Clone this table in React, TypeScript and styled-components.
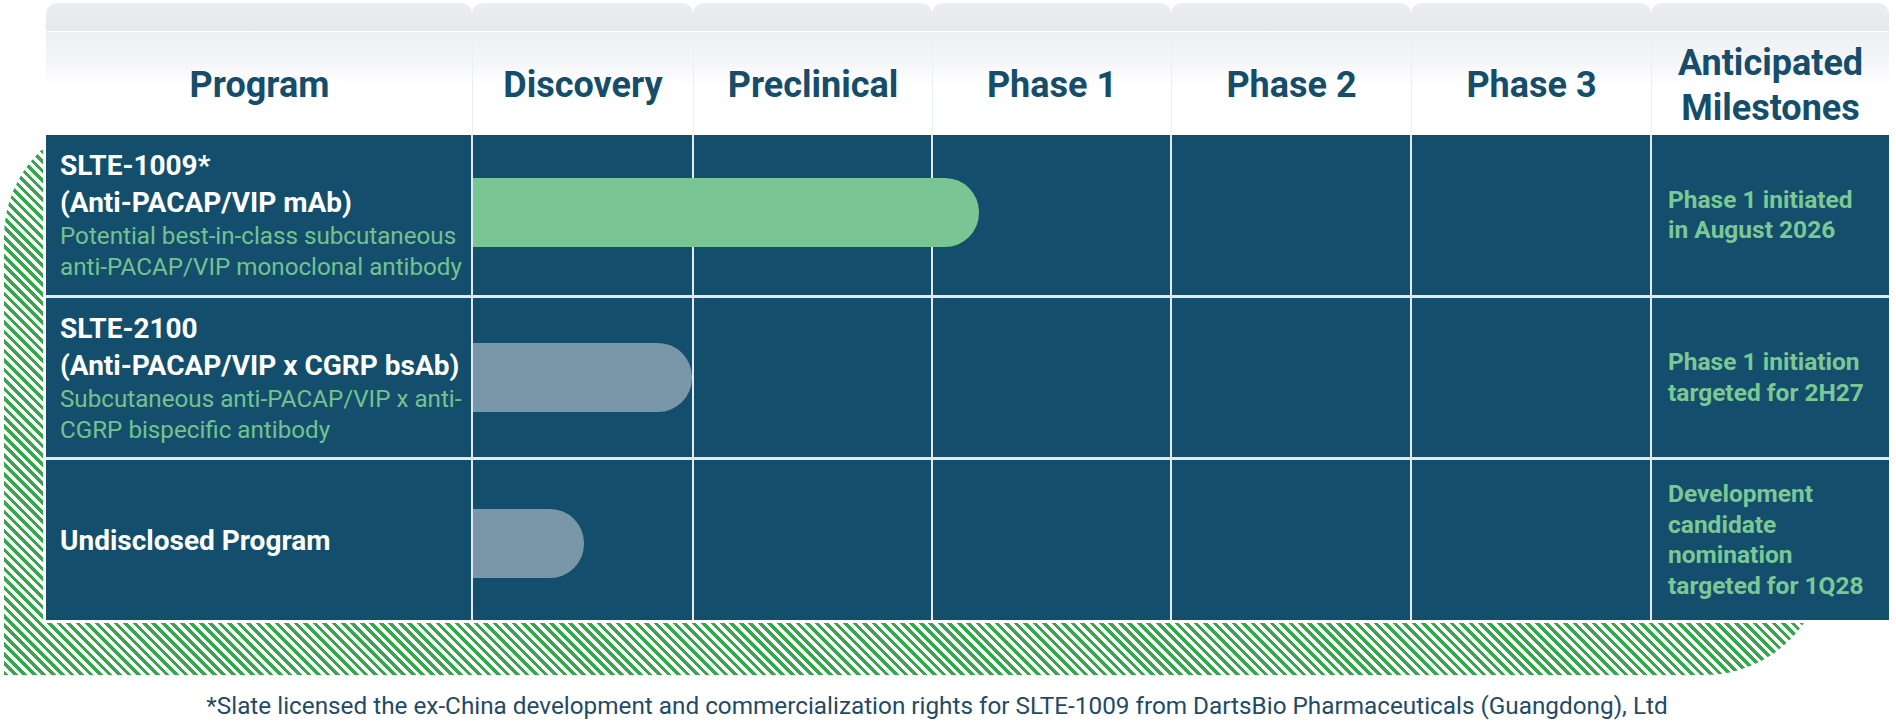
import React from "react";
import styled, { createGlobalStyle } from "styled-components";

const GlobalStyle = createGlobalStyle`
  html, body { margin: 0; padding: 0; background: #ffffff; }
  body { font-family: Roboto, "Liberation Sans", Arial, sans-serif; }
`;

const NAVY = "#134f6c";
const HEAD_TEXT = "#154d6b";

const Page = styled.div`
  width: 1896px;
  height: 723px;
  overflow: hidden;
  display: flex;
  flex-direction: column;
`;

const ChartArea = styled.div`
  position: relative;
  padding: 3px 7px 55px 46px;

  &::before {
    content: "";
    position: absolute;
    left: 4px;
    top: 117px;
    width: 1821px;
    bottom: 0;
    border-radius: 120px 0 120px 0;
    background: repeating-linear-gradient(
      45deg,
      #34a84a 0px,
      #34a84a 3.3px,
      #ffffff 3.3px,
      #ffffff 6.7px
    );
  }
`;

const Table = styled.div`
  position: relative;
  z-index: 1;
  display: flex;
  flex-direction: column;
`;

const HeaderRow = styled.div`
  display: grid;
  grid-template-columns: 426px 221px 239px 239px 240px 240px 238px;
`;

const HeaderCell = styled.div`
  display: flex;
  flex-direction: column;
`;

const Tab = styled.div`
  height: 28px;
  margin-bottom: 1px;
  border-radius: 11px 11px 0 0;
  background: linear-gradient(#eceef1, #e5e8eb);
`;

const HeaderLabel = styled.div<{ $first?: boolean }>`
  box-sizing: border-box;
  height: 103px;
  padding-top: 4px;
  display: flex;
  align-items: center;
  justify-content: center;
  text-align: center;
  font-weight: 700;
  font-size: 36px;
  line-height: 45px;
  color: ${HEAD_TEXT};
  background: linear-gradient(#edeff2 0px, #f5f6f8 30px, #ffffff 54px);
  border-left: 1px solid ${(p) => (p.$first ? "transparent" : "#eceff2")};
`;

const Body = styled.div`
  display: grid;
  grid-template-columns: 425px 219px 237px 237px 238px 238px 237px;
  grid-template-rows: 160px 159px 160px;
  gap: 3px 2px;
  background: #e2eaf0;
  box-shadow: 0 0 0 3px #ffffff;
`;

const Cell = styled.div`
  position: relative;
  background: ${NAVY};
  display: flex;
  align-items: center;
`;

const ProgramCell = styled(Cell)`
  flex-direction: column;
  justify-content: center;
  align-items: flex-start;
  padding: 0 14px;
`;

const Title = styled.div`
  font-weight: 700;
  font-size: 28px;
  line-height: 37px;
  color: #ffffff;
  white-space: nowrap;
`;

const Desc = styled.div`
  font-weight: 400;
  font-size: 24.2px;
  line-height: 31px;
  color: #74c290;
  white-space: nowrap;
`;

const Bar = styled.div<{ $tone: "green" | "grey" }>`
  position: absolute;
  z-index: 2;
  left: 0;
  top: 50%;
  height: 69px;
  margin-top: -35px;
  border-radius: 0 34px 34px 0;
  background: ${(p) => (p.$tone === "green" ? "#79c594" : "#7a97aa")};
`;

const MilestoneCell = styled(Cell)`
  padding: 0 12px 0 16px;
`;

const Milestone = styled.div`
  font-weight: 700;
  font-size: 24.5px;
  line-height: 30.5px;
  color: #7bc895;
`;

const Footnote = styled.p`
  margin: 16px 0 0;
  padding-right: 22px;
  text-align: center;
  font-size: 24.3px;
  line-height: 30px;
  font-weight: 400;
  color: #1f4b66;
  white-space: nowrap;
`;

type Program = {
  title: string[];
  desc: string[];
  bar: number;
  shift: number;
  tone: "green" | "grey";
  milestone: string[];
};

const headers: string[][] = [
  ["Program"],
  ["Discovery"],
  ["Preclinical"],
  ["Phase 1"],
  ["Phase 2"],
  ["Phase 3"],
  ["Anticipated", "Milestones"],
];

const programs: Program[] = [
  {
    title: ["SLTE-1009*", "(Anti-PACAP/VIP mAb)"],
    desc: ["Potential best-in-class subcutaneous", "anti-PACAP/VIP monoclonal antibody"],
    bar: 506,
    shift: -2,
    tone: "green",
    milestone: ["Phase 1 initiated", "in August 2026"],
  },
  {
    title: ["SLTE-2100", "(Anti-PACAP/VIP x CGRP bsAb)"],
    desc: ["Subcutaneous anti-PACAP/VIP x anti-", "CGRP bispecific antibody"],
    bar: 219,
    shift: 0,
    tone: "grey",
    milestone: ["Phase 1 initiation", "targeted for 2H27"],
  },
  {
    title: ["Undisclosed Program"],
    desc: [],
    bar: 111,
    shift: 4,
    tone: "grey",
    milestone: ["Development", "candidate", "nomination", "targeted for 1Q28"],
  },
];

const Lines: React.FC<{ lines: string[] }> = ({ lines }) => (
  <>
    {lines.map((l, i) => (
      <React.Fragment key={i}>
        {i > 0 && <br />}
        {l}
      </React.Fragment>
    ))}
  </>
);

export default function App() {
  return (
    <Page>
      <GlobalStyle />
      <ChartArea>
        <Table>
          <HeaderRow>
            {headers.map((h, i) => (
              <HeaderCell key={i}>
                <Tab />
                <HeaderLabel $first={i === 0}>
                  <span>
                    <Lines lines={h} />
                  </span>
                </HeaderLabel>
              </HeaderCell>
            ))}
          </HeaderRow>
          <Body>
            {programs.map((p, r) => (
              <React.Fragment key={r}>
                <ProgramCell>
                  {p.title.map((t, i) => (
                    <Title key={i}>{t}</Title>
                  ))}
                  {p.desc.map((d, i) => (
                    <Desc key={i}>{d}</Desc>
                  ))}
                </ProgramCell>
                <Cell>
                  <Bar
                    $tone={p.tone}
                    style={{ width: p.bar, transform: `translateY(${p.shift}px)` }}
                  />
                </Cell>
                <Cell />
                <Cell />
                <Cell />
                <Cell />
                <MilestoneCell>
                  <Milestone>
                    <Lines lines={p.milestone} />
                  </Milestone>
                </MilestoneCell>
              </React.Fragment>
            ))}
          </Body>
        </Table>
      </ChartArea>
      <Footnote>
        *Slate licensed the ex-China development and commercialization rights for SLTE-1009 from
        DartsBio Pharmaceuticals (Guangdong), Ltd
      </Footnote>
    </Page>
  );
}
